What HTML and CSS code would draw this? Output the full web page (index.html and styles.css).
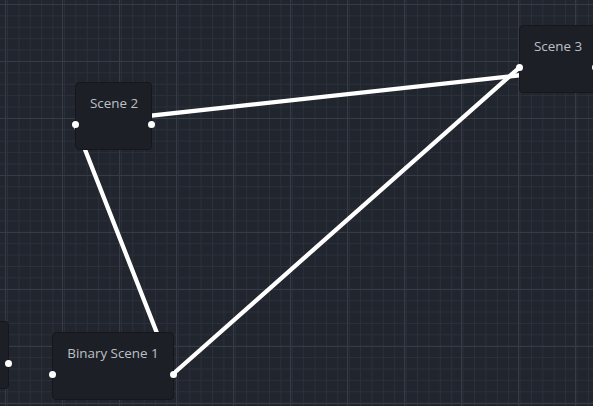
FILE: index.html
```html
<!DOCTYPE html>
<html lang="en">
<head>
<meta charset="utf-8">
<title>Scene Graph</title>
<link rel="stylesheet" href="styles.css">
</head>
<body>
<div class="canvas">
  <!-- connections sit under the nodes -->
  <svg class="edges" width="593" height="406" viewBox="0 0 593 406">
    <line x1="75" y1="124" x2="595" y2="67" />
    <line x1="75" y1="124" x2="173" y2="374" />
    <line x1="173" y1="374" x2="520" y2="67" />
  </svg>

  <!-- node scrolled mostly off the left edge -->
  <div class="node nodeLeft">
    <span class="handle handleOut"></span>
  </div>

  <div class="node nodeScene2">
    <div class="nodeTitle">Scene 2</div>
    <span class="handle handleIn"></span>
    <span class="handle handleOut"></span>
  </div>

  <div class="node nodeScene3">
    <div class="nodeTitle">Scene 3</div>
    <span class="handle handleIn"></span>
    <span class="handle handleOut"></span>
  </div>

  <div class="node nodeBinary">
    <div class="nodeTitle">Binary Scene 1</div>
    <span class="handle handleIn"></span>
    <span class="handle handleOut"></span>
  </div>
</div>
</body>
</html>
```

FILE: styles.css
```css
html, body {
  margin: 0;
  padding: 0;
}
body {
  background-color: #21252e;
  font-family: "Open Sans", "Noto Sans", sans-serif;
  overflow: hidden;
}
.canvas {
  position: relative;
  width: 593px;
  height: 406px;
  overflow: hidden;
  background-color: #21252e;
  background-image:
    linear-gradient(to right, #363b47 1px, transparent 1px),
    linear-gradient(to bottom, #363b47 1px, transparent 1px),
    linear-gradient(to right, #2b303a 1px, transparent 1px),
    linear-gradient(to bottom, #2b303a 1px, transparent 1px);
  background-size: 57px 57px, 57px 57px, 11.4px 11.4px, 11.4px 11.4px;
  background-position: 5px 4px, 5px 4px, 7px 4px, 7px 4px;
}
.edges {
  position: absolute;
  left: 0;
  top: 0;
}
.edges line {
  stroke: #ffffff;
  stroke-width: 4.3;
  stroke-linecap: round;
}
.node {
  position: absolute;
  box-sizing: border-box;
  height: 68px;
  padding: 0 14px;
  background-color: #1c1f26;
  border: 1px solid #15171c;
  border-radius: 4px;
  color: #bcc0c7;
  font-size: 13.4px;
}
.nodeTitle {
  padding-top: 10px;
  line-height: 20px;
  white-space: nowrap;
  text-align: center;
}
.handle {
  position: absolute;
  top: 38px;
  width: 7px;
  height: 7px;
  border-radius: 50%;
  background-color: #ffffff;
}
.handleIn {
  left: -4px;
}
.handleOut {
  right: -4px;
}
.nodeLeft {
  left: -70px;
  top: 321px;
  width: 79px;
}
.nodeScene2 {
  left: 75px;
  top: 82px;
  width: 77px;
}
.nodeScene3 {
  left: 519px;
  top: 25px;
  width: 77px;
}
.nodeBinary {
  left: 52px;
  top: 332px;
  width: 122px;
}
```
